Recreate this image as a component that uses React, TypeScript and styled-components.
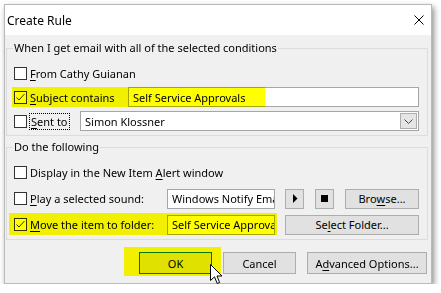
import React from 'react';
import styled, { createGlobalStyle } from 'styled-components';

const GlobalStyle = createGlobalStyle`
  html, body {
    margin: 0;
    padding: 0;
    background: #fff;
  }
  body {
    font-family: "Noto Sans", "Segoe UI", sans-serif;
    font-size: 11px;
    color: #000;
  }
`;

const Window = styled.div`
  position: relative;
  margin: 4px 0 0 4px;
  width: 428px;
  height: 280px;
  box-sizing: border-box;
  border: 1px solid #b9b9b9;
  background: #f0f0f0;
  box-shadow: 2px 3px 6px rgba(0, 0, 0, 0.45);
  display: flex;
  flex-direction: column;
`;

const TitleBar = styled.div`
  height: 30px;
  flex: none;
  background: #fff;
  display: flex;
  align-items: center;
  justify-content: space-between;
  padding: 0 7px 0 2px;
  font-size: 12px;
`;

const Body = styled.div`
  flex: 1;
  display: flex;
  flex-direction: column;
  padding: 5px 3px 0 1px;
`;

const Group = styled.fieldset<{ $mt?: number }>`
  margin: ${(p) => p.$mt || 0}px 0 0 0;
  padding: 5px 8px 2px 7px;
  border: 1px solid #dcdcdc;
  min-width: 0;
  display: flex;
  flex-direction: column;
`;

const Legend = styled.legend`
  padding: 0 1px;
  margin-left: -1px;
  line-height: 16px;
`;

const Rows = styled.div<{ $gap?: number }>`
  display: flex;
  flex-direction: column;
  gap: ${(p) => p.$gap || 0}px;
`;

const Row = styled.div<{ $h: number }>`
  position: relative;
  height: ${(p) => p.$h}px;
  display: flex;
  align-items: center;
`;

const Highlight = styled.div<{ $l: number; $t: number; $w: number; $h: number }>`
  position: absolute;
  left: ${(p) => p.$l}px;
  top: ${(p) => p.$t}px;
  width: ${(p) => p.$w}px;
  height: ${(p) => p.$h}px;
  background: #ffff00;
  mix-blend-mode: multiply;
  pointer-events: none;
`;

const CheckLabel = styled.label<{ $w?: number }>`
  display: flex;
  align-items: center;
  gap: 3px;
  flex: none;
  width: ${(p) => (p.$w ? `${p.$w}px` : 'auto')};
  white-space: nowrap;
`;

const Box = styled.span`
  width: 13px;
  height: 13px;
  box-sizing: border-box;
  border: 1px solid #333;
  background: #fff;
  flex: none;
  display: flex;
  align-items: center;
  justify-content: center;
`;

const Focus = styled.span`
  outline: 1px dotted #000;
  outline-offset: 0;
  padding: 0 1px;
`;

const TextBox = styled.div<{ $w?: number }>`
  height: 20px;
  box-sizing: border-box;
  ${(p) => (p.$w ? `width: ${p.$w}px; flex: none;` : 'flex: 1;')}
  border: 1px solid #a6a6a6;
  background: #fff;
  padding: 0 4px;
  display: flex;
  align-items: center;
  overflow: hidden;
  white-space: nowrap;
`;

const Combo = styled(TextBox)`
  padding: 0 1px 0 4px;
  justify-content: space-between;
`;

const DropBtn = styled.span`
  width: 17px;
  height: 16px;
  box-sizing: border-box;
  border: 1px solid #adadad;
  background: #e5e5e5;
  display: flex;
  align-items: center;
  justify-content: center;
`;

const Button = styled.div<{ $w?: number; $h?: number; $ml?: number; $default?: boolean }>`
  height: ${(p) => p.$h || 20}px;
  box-sizing: border-box;
  ${(p) => (p.$w ? `width: ${p.$w}px; flex: none;` : 'flex: 1;')}
  margin-left: ${(p) => p.$ml || 0}px;
  border: 1px solid ${(p) => (p.$default ? '#0078d7' : '#adadad')};
  background: #e1e1e1;
  display: flex;
  align-items: center;
  justify-content: center;
  white-space: nowrap;
`;

const Footer = styled.div`
  display: flex;
  justify-content: flex-end;
  gap: 11px;
  margin-top: 12px;
  padding-right: 1px;
`;

const Anchor = styled.div`
  position: relative;
  display: flex;
`;

const Cursor = styled.svg`
  position: absolute;
  left: 71px;
  top: 12px;
`;

const U = styled.u`
  text-decoration-thickness: 1px;
  text-underline-offset: 2px;
`;

const Check = ({ checked }: { checked?: boolean }) => (
  <Box>
    {checked && (
      <svg width="11" height="11" viewBox="0 0 11 11">
        <path d="M1.5 5.5 L4 8 L9.5 2" fill="none" stroke="#333" strokeWidth="1" />
      </svg>
    )}
  </Box>
);

const App = () => (
  <>
    <GlobalStyle />
    <Window>
      <TitleBar>
        <span>Create Rule</span>
        <svg width="10" height="10" viewBox="0 0 10 10">
          <path d="M0.5 0.5 L9.5 9.5 M9.5 0.5 L0.5 9.5" stroke="#000" strokeWidth="1" />
        </svg>
      </TitleBar>
      <Body>
        <Group>
          <Legend>When I get email with all of the selected conditions</Legend>
          <Rows>
            <Row $h={24}>
              <CheckLabel>
                <Check />
                <span><U>F</U>rom Cathy Guianan</span>
              </CheckLabel>
            </Row>
            <Row $h={24}>
              <CheckLabel $w={114}>
                <Check checked />
                <span><U>S</U>ubject contains</span>
              </CheckLabel>
              <TextBox>Self Service Approvals</TextBox>
              <Highlight $l={-2} $t={2} $w={253} $h={20} />
            </Row>
            <Row $h={24}>
              <CheckLabel $w={66}>
                <Check />
                <Focus><U>S</U>ent to</Focus>
              </CheckLabel>
              <Combo>
                <span>Simon Klossner</span>
                <DropBtn>
                  <svg width="9" height="5" viewBox="0 0 9 5">
                    <path d="M0.5 0.5 L4.5 4.5 L8.5 0.5" fill="none" stroke="#444" strokeWidth="1" />
                  </svg>
                </DropBtn>
              </Combo>
            </Row>
          </Rows>
        </Group>
        <Group $mt={3}>
          <Legend>Do the following</Legend>
          <Rows $gap={1}>
            <Row $h={25}>
              <CheckLabel>
                <Check />
                <span>Display in the New Item <U>A</U>lert window</span>
              </CheckLabel>
            </Row>
            <Row $h={25}>
              <CheckLabel $w={153}>
                <Check />
                <span><U>P</U>lay a selected sound:</span>
              </CheckLabel>
              <TextBox $w={108}>Windows Notify Email</TextBox>
              <Button $w={19} $ml={10}>
                <svg width="6" height="9" viewBox="0 0 6 9">
                  <path d="M1 0 L5.5 4.5 L1 9 Z" fill="#000" />
                </svg>
              </Button>
              <Button $w={19} $ml={11}>
                <svg width="7" height="7" viewBox="0 0 7 7">
                  <rect width="7" height="7" fill="#000" />
                </svg>
              </Button>
              <Button $ml={11}>Bro<U>w</U>se...</Button>
            </Row>
            <Row $h={25}>
              <CheckLabel $w={153}>
                <Check checked />
                <span><U>M</U>ove the item to folder:</span>
              </CheckLabel>
              <TextBox $w={108}>Self Service Approvals</TextBox>
              <Button $ml={10}>Se<U>l</U>ect Folder...</Button>
              <Highlight $l={-5} $t={1} $w={268} $h={22} />
            </Row>
          </Rows>
        </Group>
        <Footer>
          <Anchor>
            <Button $w={73} $h={22} $default>OK</Button>
            <Highlight $l={-15} $t={-5} $w={97} $h={29} />
            <Cursor width="13" height="21" viewBox="0 0 13 21">
              <path
                d="M0.5 0.5 L0.5 16.5 L4.5 12.8 L7.2 19.5 L9.6 18.5 L7 12 L12 12 Z"
                fill="#fff"
                stroke="#000"
                strokeWidth="1"
                strokeLinejoin="miter"
              />
            </Cursor>
          </Anchor>
          <Button $w={73} $h={22}>Cancel</Button>
          <Button $w={120} $h={22}>A<U>d</U>vanced Options...</Button>
        </Footer>
      </Body>
    </Window>
  </>
);

export default App;
